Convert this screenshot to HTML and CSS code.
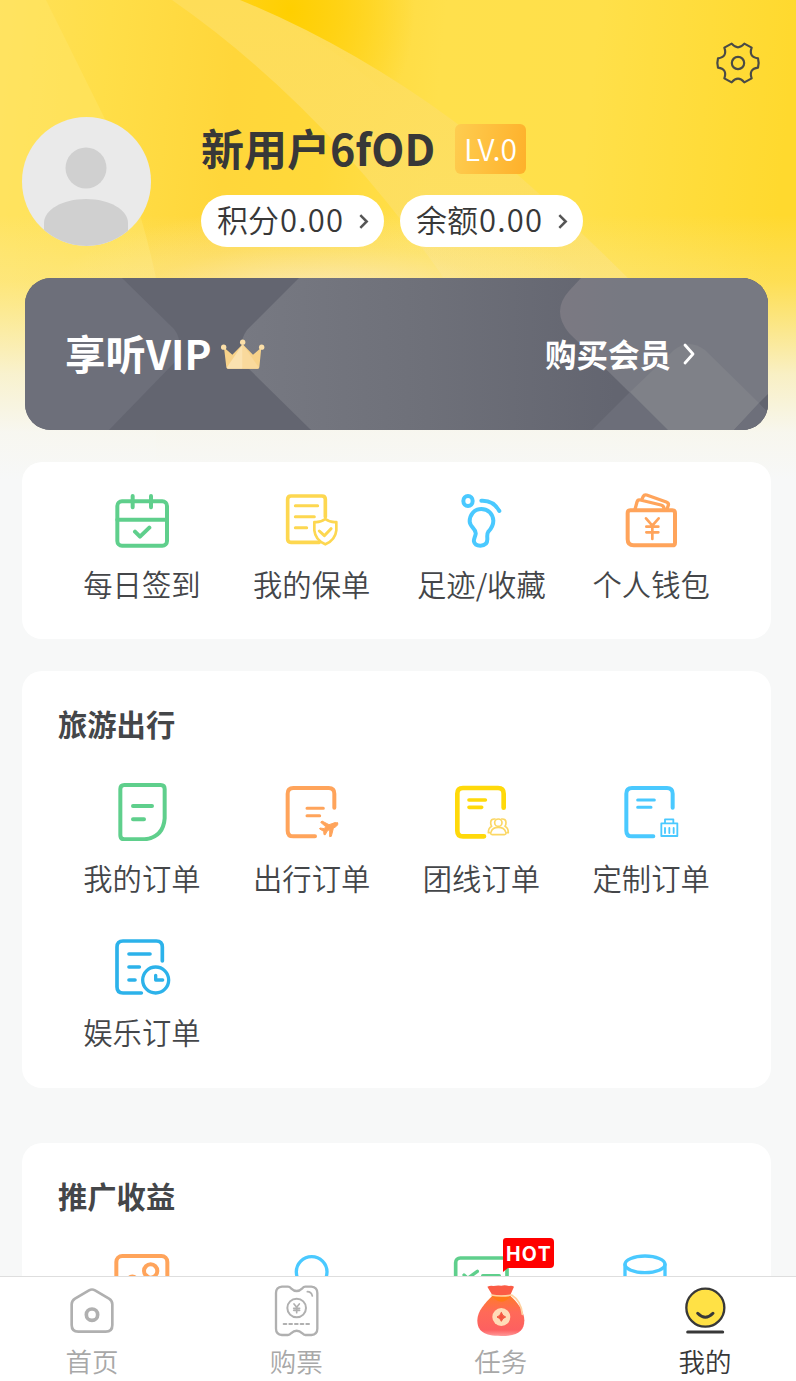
FILE: index.html
```html
<!DOCTYPE html>
<html lang="zh-CN">
<head>
	<meta charset="UTF-8">
	<title>我的</title>
	<link rel="stylesheet" href="styles.css">
</head>
<body>
	<div class="page">
		<svg class="backdrop" viewBox="0 0 796 500">
			<defs>
				<linearGradient id="sky" x1="0" x2="1" y1="0" y2="0.06">
					<stop offset="0" stop-color="#ffe15a"/>
					<stop offset="0.14" stop-color="#ffde48"/>
					<stop offset="0.3" stop-color="#ffd63a"/>
					<stop offset="0.42" stop-color="#ffd93a"/>
					<stop offset="0.56" stop-color="#ffe04c"/>
					<stop offset="0.75" stop-color="#ffe04a"/>
					<stop offset="1" stop-color="#ffd92e"/>
				</linearGradient>
				<radialGradient id="spot" gradientUnits="userSpaceOnUse" cx="0" cy="0" r="1" gradientTransform="translate(290 10) scale(125 150)">
					<stop offset="0" stop-color="#ffcf00"/>
					<stop offset="0.25" stop-color="#ffd008" stop-opacity="0.9"/>
					<stop offset="1" stop-color="#ffd000" stop-opacity="0"/>
				</radialGradient>
				<linearGradient id="ray" x1="0" x2="0" y1="0" y2="1">
					<stop offset="0" stop-color="#fedd58"/>
					<stop offset="1" stop-color="#fce070" stop-opacity="0.6"/>
				</linearGradient>
				<linearGradient id="fade" gradientUnits="userSpaceOnUse" x1="0" y1="215" x2="0" y2="480">
					<stop offset="0" stop-color="#f7f8f8" stop-opacity="0"/>
					<stop offset="0.25" stop-color="#f8f3dc" stop-opacity="0.22"/>
					<stop offset="0.6" stop-color="#f7f6ee" stop-opacity="0.78"/>
					<stop offset="0.82" stop-color="#f7f8f8" stop-opacity="0.95"/>
					<stop offset="1" stop-color="#f7f8f8"/>
				</linearGradient>
				<radialGradient id="glow" gradientUnits="userSpaceOnUse" cx="0" cy="0" r="1" gradientTransform="translate(320 330) scale(300 125)">
					<stop offset="0" stop-color="#fbe9c4"/>
					<stop offset="0.4" stop-color="#fbe6ac" stop-opacity="0.75"/>
					<stop offset="0.7" stop-color="#fce490" stop-opacity="0.3"/>
					<stop offset="1" stop-color="#fbe8a8" stop-opacity="0"/>
				</radialGradient>
			</defs>
			<rect width="796" height="500" fill="url(#sky)"/>
			<path d="M238 0H440V160H455Q350 45 238 0Z" fill="url(#spot)"/>
			<path d="M0 0H46L104 117Q140 200 156 278V500H0Z" fill="#ffe668" opacity="0.5"/>
			<path d="M172 0Q330 110 452 290L640 290Q540 190 455 122Q350 45 240 0Z" fill="url(#ray)"/>
			<rect width="796" height="500" fill="url(#glow)"/>
			<rect width="796" height="500" fill="url(#fade)"/>
		</svg>

		<div class="topbar">
			<svg class="gear" viewBox="-69 -66 138 132">
				<path d="M-19 -58Q0 -36 19 -58L41 -46Q31 -18 60 -14Q64 0 60 14Q31 18 41 46L19 58Q0 36 -19 58L-41 46Q-31 18 -60 14Q-64 0 -60 -14Q-31 -18 -41 -46Z"/>
				<circle r="18.500"/>
			</svg>
		</div>

		<div class="profile">
			<svg class="avatar" viewBox="0 0 130 130">
				<clipPath id="round"><circle cx="65.500" cy="65.500" r="64.500"/></clipPath>
				<g clip-path="url(#round)">
					<rect width="130" height="130" fill="#eaeaea"/>
					<circle cx="65" cy="52" r="20.500" fill="#d0d0d0"/>
					<path d="M23 130V107C23 94 41 83 65 83S107 94 107 107V130Z" fill="#d0d0d0"/>
				</g>
			</svg>
			<div class="info">
				<div class="name-row">
					<span class="name">新用户6fOD</span>
					<span class="level">LV.0</span>
				</div>
				<div class="pills">
					<div class="pill"><div>积分<span class="num">0.00</span></div><svg viewBox="0 0 10 16"><path d="M2 2L8 8L2 14"/></svg></div>
					<div class="pill"><div>余额<span class="num">0.00</span></div><svg viewBox="0 0 10 16"><path d="M2 2L8 8L2 14"/></svg></div>
				</div>
			</div>
		</div>

		<div class="vip">
			<svg class="vip-bg" viewBox="0 0 743 152">
				<defs>
					<linearGradient id="band" gradientUnits="userSpaceOnUse" x1="215" y1="0" x2="590" y2="0">
						<stop offset="0" stop-color="#777982"/>
						<stop offset="0.5" stop-color="#6e7079"/>
						<stop offset="1" stop-color="#636570"/>
					</linearGradient>
					<linearGradient id="pane" gradientUnits="userSpaceOnUse" x1="535" y1="0" x2="600" y2="0">
						<stop offset="0" stop-color="#7b7982"/>
						<stop offset="1" stop-color="#777982"/>
					</linearGradient>
				</defs>
				<rect width="743" height="152" fill="#636570"/>
				<path d="M0 0H97L149 51Q160 65 149 85L84 152H0Z" fill="#6d6f7a"/>
				<path d="M274 0L222 52Q211 67 222 89L286 152H743V0Z" fill="url(#band)"/>
				<path d="M556 0H743V117L709 152H643L544 55Q526 33 544 13Z" fill="url(#pane)"/>
				<path d="M605 114L643 152H567Z" fill="#6c6e79"/>
				<path d="M605 114L649 72Q664 60 680 72L734 125L709 152H643Z" fill="#7f8188"/>
				<path d="M734 125L743 134V152H709Z" fill="#6d6f7a"/>
				<path d="M734 125L743 116V134Z" fill="#62646f"/>
			</svg>
			<div class="vip-name">
				<span>享听VIP</span>
				<svg class="crown" viewBox="0 0 132 92">
					<path d="M9 25L34 47L65 15L96 47L121 25L115 84Q114 89 109 89H22Q17 89 16 84Z" fill="#f7d28a"/>
					<path d="M65 15L17 86Q19 89 22 89H65Z" fill="#fbe2b0"/>
					<path d="M65 15L114 86Q112 89 109 89H65Z" fill="#f9d99c"/>
					<g fill="#fbdfa8"><circle cx="8" cy="24" r="8"/><circle cx="65" cy="9" r="8"/><circle cx="122" cy="24" r="8"/></g>
				</svg>
			</div>
			<div class="vip-buy">
				<span>购买会员</span>
				<svg viewBox="0 0 12 22"><path d="M2 2L10 11L2 20"/></svg>
			</div>
		</div>

		<div class="card quick">
			<div class="grid">
				<div class="item green">
					<svg class="icon" viewBox="0 0 180 180">
						<rect x="16" y="28" width="149" height="133" rx="14"/>
						<path d="M16 83H165M62 12V46M117 12V46M69 119L84 134L112 107"/>
					</svg>
					<span>每日签到</span>
				</div>
				<div class="item gold">
					<svg class="icon" viewBox="0 0 180 180">
						<path d="M130 74V22Q130 12 120 12H27Q17 12 17 22V141Q17 151 27 151H112" stroke-width="11"/>
						<path d="M40 41H107M40 74H97M40 107H74M112 117L127 131L147 110" stroke-width="9"/>
						<path d="M130 81Q145 92 163 90V115Q160 144 130 157Q100 144 97 115V90Q115 92 130 81Z" stroke-width="8"/>
					</svg>
					<span>我的保单</span>
				</div>
				<div class="item blue">
					<svg class="icon" viewBox="0 0 180 180">
						<ellipse cx="51" cy="27" rx="14" ry="15"/>
						<path d="M91 26Q127 24 145 57"/>
						<path d="M91 51C68 51 56 70 56 88C56 106 77 110 74 126C72 136 67 143 69 149C71 158 80 161 88 161C101 161 109 155 109 142C109 132 107 126 112 119C120 110 127 103 127 86C126 66 112 51 91 51Z"/>
					</svg>
					<span>足迹/收藏</span>
				</div>
				<div class="item orange">
					<svg class="icon" viewBox="0 0 180 180">
						<path d="M28 55H154Q162 55 162 63V152Q162 160 154 160H38Q20 160 20 142V63Q20 55 28 55Z" stroke-width="12"/>
						<path d="M42 52L48 30Q50 22 58 24L120 39Q130 42 129 52M62 23L67 13Q70 7 77 9L136 30Q144 33 142 40L138 52" stroke-width="10"/>
						<path d="M75 79L94 101L113 79M94 101V141M76 104H112M76 121H112" stroke-width="8"/>
					</svg>
					<span>个人钱包</span>
				</div>
			</div>
		</div>

		<div class="card travel">
			<h2>旅游出行</h2>
			<div class="grid">
				<div class="item green">
					<svg class="icon" viewBox="0 0 180 180">
						<path d="M37 12H146Q158 12 158 24V112Q154 168 98 175H37Q25 175 25 163V24Q25 12 37 12Z"/>
						<path d="M63 75H120M63 115H96"/>
					</svg>
					<span>我的订单</span>
				</div>
				<div class="item orange">
					<svg class="icon" viewBox="0 0 180 180">
						<path d="M157 80V38Q157 21 140 21H34Q17 21 17 38V149Q17 166 34 166H99" stroke-width="12"/>
						<path d="M75 82H124M75 104H113" stroke-width="9"/>
						<path class="solid" d="M167 126Q160 122 150 128L141 131L120 120L116 124L131 137L127 143L114 141L113 144L125 151L126 161L130 161L135 151L143 145L143 167L148 166L154 142L163 136Q169 132 167 126Z"/>
					</svg>
					<span>出行订单</span>
				</div>
				<div class="item yellow">
					<svg class="icon" viewBox="0 0 180 180">
						<path d="M158 80V38Q158 21 141 21H36Q19 21 19 38V149Q19 166 36 166H99" stroke-width="14"/>
						<path d="M54 57H103M54 79H92" stroke-width="11"/>
						<g stroke="#fbd765" stroke-width="5">
							<circle cx="142" cy="125" r="11"/>
							<path d="M124 161Q117 161 120 153Q124 139 142 139T164 153Q167 161 160 161Z"/>
							<path d="M132 114Q119 113 119 125Q119 132 122 136Q112 141 112 155H116M152 114Q165 113 165 125Q165 132 162 136Q172 141 172 155H168"/>
						</g>
					</svg>
					<span>团线订单</span>
				</div>
				<div class="item blue">
					<svg class="icon" viewBox="0 0 180 180">
						<path d="M155 80V38Q155 21 138 21H33Q16 21 16 38V149Q16 166 33 166H97" stroke-width="12"/>
						<path d="M50 57H100M50 79H90" stroke-width="9"/>
						<path d="M121 127H169V165H121ZM132 125V115H157V125M132 141V156M145 141V156M158 141V156" stroke-width="5.500"/>
					</svg>
					<span>定制订单</span>
				</div>
				<div class="item azure">
					<svg class="icon" viewBox="0 0 180 180">
						<path d="M151 78V36Q151 18 133 18H33Q15 18 15 36V156Q15 174 33 174H88" stroke-width="11"/>
						<path d="M51 57H114M51 96H82M51 135H69" stroke-width="11"/>
						<circle cx="131" cy="135" r="39" stroke-width="10"/>
						<path d="M131 121V135H152" stroke-width="10"/>
					</svg>
					<span>娱乐订单</span>
				</div>
			</div>
		</div>

		<div class="card promo">
			<h2>推广收益</h2>
			<div class="grid">
				<div class="item orange">
					<svg class="icon" viewBox="0 0 180 180">
						<rect x="13" y="9" width="153" height="150" rx="18"/>
						<circle cx="116" cy="54" r="20"/>
						<path d="M50 75Q61 66 72 75L100 110M104 68L90 80"/>
					</svg>
				</div>
				<div class="item blue">
					<svg class="icon" viewBox="0 0 180 180">
						<circle cx="89" cy="57" r="46" stroke-width="10"/>
						<path d="M20 165Q40 110 89 110T158 165"/>
					</svg>
				</div>
				<div class="item green">
					<svg class="icon" viewBox="0 0 180 180">
						<rect x="14" y="15" width="154" height="140" rx="14" stroke-width="11"/>
						<path d="M39 66L50 76L79 55M95 68H145" stroke-width="10"/>
					</svg>
					<span class="hot">HOT</span>
				</div>
				<div class="item blue">
					<svg class="icon" viewBox="0 0 180 180">
						<ellipse cx="72" cy="34" rx="60" ry="25" stroke-width="10"/>
						<path d="M12 34V140Q72 180 132 140V34" stroke-width="10"/>
					</svg>
				</div>
			</div>
		</div>

		<div class="tabbar">
			<div class="tab">
				<svg viewBox="0 0 180 180">
					<path d="M81 28Q90 23 99 28L141 53Q151 59 151 70V132Q151 152 131 152H49Q29 152 29 132V70Q29 59 39 53Z" stroke-width="8"/>
					<circle cx="90" cy="101" r="17" stroke-width="11"/>
				</svg>
				<span>首页</span>
			</div>
			<div class="tab">
				<svg viewBox="0 0 180 180">
					<path d="M48 17H66Q71 17 75 22Q92 38 109 22Q113 17 118 17H136Q154 19 154 36V143Q154 160 136 162H118Q113 162 109 157Q92 141 75 157Q71 162 66 162H48Q30 160 30 143V36Q30 19 48 17Z" stroke-width="7"/>
					<circle cx="92" cy="81" r="28" stroke-width="6"/>
					<path d="M84 69L92 79L100 69M92 79V95M83 82H101M83 88H101M124 32Q136 32 139 45" stroke-width="5"/>
					<path d="M53 129H133" stroke-width="6" stroke-dasharray="8 9"/>
				</svg>
				<span>购票</span>
			</div>
			<div class="tab">
				<svg viewBox="0 0 180 180">
					<defs>
						<linearGradient id="bag" x1="0" x2="0" y1="0" y2="1">
							<stop offset="0" stop-color="#ff7a2a"/>
							<stop offset="0.4" stop-color="#ff6a58"/>
							<stop offset="0.85" stop-color="#fd6060"/>
							<stop offset="1" stop-color="#ff9a9a"/>
						</linearGradient>
					</defs>
					<g stroke="none">
						<path d="M49 17Q59 12 67 15Q80 12 91 14Q102 11 114 15Q122 12 129 17L117 44H65Z" fill="#fb5b45"/>
						<path d="M64 44H118C138 62 160 90 160 118C160 150 142 165 90 165S19 150 19 118C19 90 43 65 64 44Z" fill="url(#bag)"/>
						<path d="M64 46Q90 78 118 46Z" fill="#ff7a18"/>
						<circle cx="91" cy="108" r="27" fill="#ffdcb8"/>
						<path d="M91 95Q94 105 104 108Q94 111 91 121Q88 111 78 108Q88 105 91 95Z" fill="#f4553f" stroke="#f4553f" stroke-width="3"/>
					</g>
					<path d="M61 42Q90 48 122 42Q151 60 154 100" stroke="#ffd2a0" stroke-width="5"/>
				</svg>
				<span>任务</span>
			</div>
			<div class="tab active">
				<svg viewBox="0 0 180 180">
					<circle cx="91" cy="80" r="57" fill="#ffe145" stroke-width="7"/>
					<path d="M68 97Q91 121 114 97" stroke-width="9"/>
					<path d="M38 153H143" stroke-width="9"/>
				</svg>
				<span>我的</span>
			</div>
		</div>
	</div>
</body>
</html>
```
FILE: styles.css
```css
* {
	box-sizing: border-box;
}
body {
	margin: 0;
	background: #f7f8f8;
	color: #444649;
	font-family: "Noto Sans CJK SC", sans-serif;
	font-weight: 350;
}
svg {
	display: block;
	fill: none;
	stroke-linecap: round;
	stroke-linejoin: round;
}
.page {
	position: relative;
	height: 1381px;
	overflow: hidden;
}
.backdrop {
	position: absolute;
	top: 0;
	left: 0;
	width: 796px;
	height: 500px;
}

/* header */
.topbar {
	position: relative;
	display: flex;
	justify-content: flex-end;
	padding: 41px 35px 0 0;
	height: 116px;
}
.gear {
	width: 46px;
	height: 44px;
	stroke: #4b4b45;
	stroke-width: 6.5;
}
.profile {
	position: relative;
	display: flex;
	height: 162px;
	padding-left: 21px;
}
.avatar {
	width: 130px;
	height: 130px;
	margin-right: 50px;
}
.name-row {
	display: flex;
	align-items: center;
	height: 66px;
	margin-bottom: 13px;
}
.name {
	width: 254px;
	font-size: 43px;
	line-height: 64px;
	margin-top: -4px;
	font-weight: 700;
	color: #383838;
	white-space: nowrap;
}
.level {
	width: 71px;
	height: 50px;
	border-radius: 6px;
	background: linear-gradient(100deg, #fecd50, #feb02a);
	color: #fff;
	font-size: 30px;
	line-height: 48px;
	text-align: center;
}
.pills {
	display: flex;
	gap: 16px;
}
.pill {
	display: flex;
	align-items: center;
	justify-content: space-between;
	width: 183px;
	height: 52px;
	padding: 0 15px 0 16px;
	border-radius: 26px;
	background: #fff;
	color: #383838;
	font-size: 31px;
	line-height: 47px;
}
.pill div {
	height: 52px;
}
.num {
	margin-left: 1px;
	letter-spacing: 1.2px;
}
.pill svg {
	width: 11px;
	height: 17px;
	stroke: #555;
	stroke-width: 2.4;
	stroke-linecap: butt;
	stroke-linejoin: miter;
}

/* vip banner */
.vip {
	position: relative;
	display: flex;
	justify-content: space-between;
	align-items: center;
	width: 743px;
	height: 152px;
	margin: 0 0 32px 25px;
	padding: 0 73px 0 40px;
	border-radius: 26px;
	overflow: hidden;
	color: #fff;
	font-weight: 700;
}
.vip-bg {
	position: absolute;
	top: 0;
	left: 0;
	width: 743px;
	height: 152px;
}
.vip-name,
.vip-buy {
	position: relative;
	display: flex;
	align-items: center;
}
.vip-name span,
.vip-buy span {
	margin-top: -3px;
}
.vip-name {
	font-size: 40.5px;
}
.crown {
	width: 44px;
	height: 31px;
	margin-left: 10px;
}
.vip-buy {
	font-size: 31.5px;
}
.vip-buy svg {
	width: 12px;
	height: 22px;
	margin-left: 12px;
	stroke: #fff;
	stroke-width: 2.8;
}

/* cards */
.card {
	position: relative;
	width: 749px;
	margin-left: 22px;
	padding: 0 35px;
	border-radius: 20px;
	background: #fff;
}
.quick {
	height: 177px;
	padding-top: 30px;
	margin-bottom: 32px;
}
.travel {
	height: 417px;
	margin-bottom: 55px;
}
.promo {
	height: 300px;
}
h2 {
	margin: 0;
	padding: 32px 0 38px 1px;
	font-size: 29.3px;
	line-height: 40px;
	font-weight: 700;
}
.grid {
	display: grid;
	grid-template-columns: repeat(4, 1fr);
	row-gap: 38px;
}
.item {
	position: relative;
	display: flex;
	flex-direction: column;
	align-items: center;
	font-size: 29.3px;
	line-height: 40px;
	white-space: nowrap;
}
.icon {
	width: 60px;
	height: 60px;
	margin-bottom: 16px;
	stroke-width: 12;
}
.quick .icon {
	margin-bottom: 11px;
}
.green { stroke: #5fcf8c; }
.gold { stroke: #fdd750; }
.blue { stroke: #4ac9ff; }
.orange { stroke: #ffa45b; }
.yellow { stroke: #ffd90a; }
.azure { stroke: #2cb2ea; }
.orange .solid {
	fill: #ffa45b;
	stroke-width: 3;
}
.hot {
	position: absolute;
	top: -15px;
	left: 106px;
	width: 51px;
	height: 30px;
	padding-left: 2px;
	border-radius: 3px 4px 4px 0;
	background: #f00;
	color: #fff;
	font-family: Inter, sans-serif;
	font-size: 19.5px;
	font-weight: 700;
	letter-spacing: 1.4px;
	line-height: 32px;
	text-align: center;
}
.hot::after {
	content: "";
	position: absolute;
	left: 0;
	top: 30px;
	border-top: 4px solid #f00;
	border-right: 5px solid transparent;
}

/* bottom bar */
.tabbar {
	position: absolute;
	left: 0;
	bottom: 0;
	display: flex;
	justify-content: space-between;
	width: 796px;
	height: 105px;
	padding: 4px 61px 0 62px;
	border-top: 1px solid #dedede;
	background: #fff;
}
.tab {
	width: 60px;
	text-align: center;
	font-size: 26.5px;
	line-height: 40px;
	color: #a8a8a8;
	stroke: #b0b0b0;
}
.tab svg {
	width: 60px;
	height: 60px;
}
.tab.active {
	color: #383838;
	stroke: #383838;
}
```
